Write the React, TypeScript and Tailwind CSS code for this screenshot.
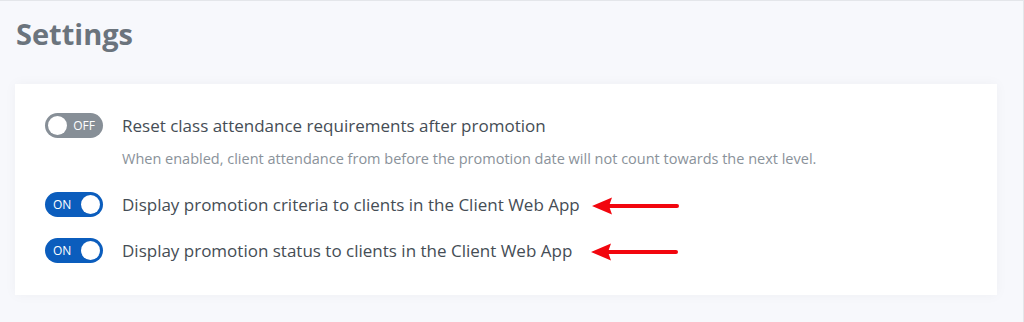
import React from "react";

function Toggle({ on }: { on: boolean }) {
  return (
    <div
      className={
        on
          ? "flex h-[25px] w-[58px] shrink-0 items-center justify-between rounded-full bg-[#0b5dbd] pl-[8px] pr-[3px]"
          : "flex h-[25px] w-[58px] shrink-0 items-center justify-between rounded-full bg-[#878f97] pl-[3px] pr-[8px]"
      }
    >
      {on ? (
        <>
          <span className="text-[12px] leading-none text-white">ON</span>
          <span className="h-[19px] w-[19px] rounded-full bg-white" />
        </>
      ) : (
        <>
          <span className="h-[19px] w-[19px] rounded-full bg-white" />
          <span className="text-[12px] leading-none text-white">OFF</span>
        </>
      )}
    </div>
  );
}

function Arrow({ wide }: { wide?: boolean }) {
  return (
    <svg
      width="90"
      height="20"
      viewBox="0 0 90 20"
      className={wide ? "ml-[18px] mt-[2px] shrink-0" : "ml-[11px] mt-[2px] shrink-0"}
    >
      <line x1="16" y1="10" x2="86" y2="10" stroke="#f2060e" strokeWidth="4" strokeLinecap="round" />
      <polygon points="1,10 21,1.5 18,10 21,18.5" fill="#f2060e" />
    </svg>
  );
}

function Row({ on, label, arrow, wide }: { on: boolean; label: string; arrow?: boolean; wide?: boolean }) {
  return (
    <div className="flex h-[25px] items-center">
      <Toggle on={on} />
      <span className="ml-[19px] text-[17px] text-[#454d55]">{label}</span>
      {arrow && <Arrow wide={wide} />}
    </div>
  );
}

export default function App() {
  return (
    <div
      className="h-[322px] w-[1024px] overflow-hidden border-t border-r border-[#e4e6ea] bg-[#f7f8fc] pl-[15px] pr-[26px]"
      style={{ fontFamily: "'Open Sans', 'Noto Sans', sans-serif" }}
    >
      <h1 className="pt-[14px] pl-[1px] text-[29px] font-bold leading-[38px] text-[#6b747d]">Settings</h1>
      <div className="mt-[31px] bg-white px-[30px] pt-[29px] pb-[32px] shadow-[0_0_12px_rgba(20,30,60,0.04)]">
        <Row on={false} label="Reset class attendance requirements after promotion" />
        <p className="mt-[11px] pl-[77px] text-[14.5px] leading-[20px] text-[#8a929a]">
          When enabled, client attendance from before the promotion date will not count towards the next level.
        </p>
        <div className="mt-[23px] flex flex-col gap-[21px]">
          <Row on label="Display promotion criteria to clients in the Client Web App" arrow />
          <Row on label="Display promotion status to clients in the Client Web App" arrow wide />
        </div>
      </div>
    </div>
  );
}
